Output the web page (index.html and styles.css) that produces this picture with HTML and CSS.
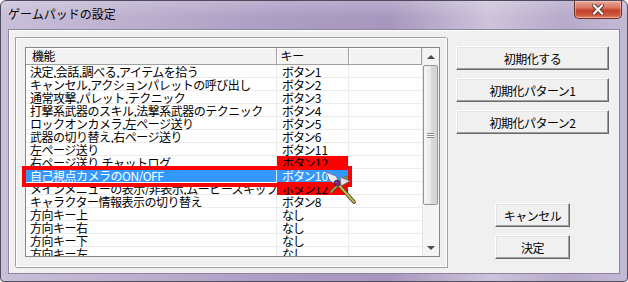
FILE: index.html
```html
<!DOCTYPE html>
<html lang="ja">
<head>
    <meta charset="UTF-8">
    <title>ゲームパッドの設定</title>
    <link rel="stylesheet" href="styles.css">
</head>
<body>
    <div class="window">
        <div class="titlebar">
            <span class="title">ゲームパッドの設定</span>
            <div class="close">
                <svg width="12" height="11" viewBox="0 0 12 11">
                    <path d="M2 1.5 L10 9.5 M10 1.5 L2 9.5" stroke="#5a2a22" stroke-width="4" stroke-linecap="square"/>
                    <path d="M2 1.5 L10 9.5 M10 1.5 L2 9.5" stroke="#fff" stroke-width="2.2" stroke-linecap="square"/>
                </svg>
            </div>
        </div>

        <div class="client">
            <div class="group">
                <div class="listview">
                    <div class="list">
                        <div class="header">
                            <div class="c1">機能</div>
                            <div class="c2">キー</div>
                            <div class="c3"></div>
                        </div>
                        <div class="row"><div class="c1">決定,会話,調べる,アイテムを拾う</div><div class="c2">ボタン1</div><div class="c3"></div></div>
                        <div class="row"><div class="c1">キャンセル,アクションパレットの呼び出し</div><div class="c2">ボタン2</div><div class="c3"></div></div>
                        <div class="row"><div class="c1">通常攻撃,パレット,テクニック</div><div class="c2">ボタン3</div><div class="c3"></div></div>
                        <div class="row"><div class="c1">打撃系武器のスキル,法撃系武器のテクニック</div><div class="c2">ボタン4</div><div class="c3"></div></div>
                        <div class="row"><div class="c1">ロックオンカメラ,左ページ送り</div><div class="c2">ボタン5</div><div class="c3"></div></div>
                        <div class="row"><div class="c1">武器の切り替え,右ページ送り</div><div class="c2">ボタン6</div><div class="c3"></div></div>
                        <div class="row"><div class="c1">左ページ送り</div><div class="c2">ボタン11</div><div class="c3"></div></div>
                        <div class="row"><div class="c1">右ページ送り,チャットログ</div><div class="c2 dup">ボタン12</div><div class="c3"></div></div>
                        <div class="row sel"><div class="c1">自己視点カメラのON/OFF</div><div class="c2">ボタン10</div><div class="c3"></div></div>
                        <div class="row"><div class="c1">メインメニューの表示/非表示,ムービースキップ</div><div class="c2 dup">ボタン12</div><div class="c3"></div></div>
                        <div class="row"><div class="c1">キャラクター情報表示の切り替え</div><div class="c2">ボタン8</div><div class="c3"></div></div>
                        <div class="row"><div class="c1">方向キー上</div><div class="c2">なし</div><div class="c3"></div></div>
                        <div class="row"><div class="c1">方向キー右</div><div class="c2">なし</div><div class="c3"></div></div>
                        <div class="row"><div class="c1">方向キー下</div><div class="c2">なし</div><div class="c3"></div></div>
                        <div class="row"><div class="c1">方向キー左</div><div class="c2">なし</div><div class="c3"></div></div>
                    </div>
                    <div class="scrollbar">
                        <div class="sb-btn"><span class="arrow-up"></span></div>
                        <div class="thumb"><span class="grip"></span></div>
                        <div class="track"></div>
                        <div class="sb-btn"><span class="arrow-down"></span></div>
                    </div>
                </div>
            </div>

            <div class="side">
                <button class="btn wide">初期化する</button>
                <button class="btn wide">初期化パターン1</button>
                <button class="btn wide">初期化パターン2</button>
                <div class="bottom">
                    <button class="btn small">キャンセル</button>
                    <button class="btn small">決定</button>
                </div>
            </div>
        </div>

        <!-- annotation over the selected row -->
        <div class="mark"></div>
        <svg class="cursor" width="34" height="36" viewBox="0 0 34 36">
            <path d="M12 12 L29 31" stroke="#4e4a1c" stroke-width="3.8" stroke-linecap="round"/>
            <path d="M12 12 L29 31" stroke="#c4b85a" stroke-width="1.9" stroke-linecap="round"/>
            <path d="M6 21 L21 6" stroke="#4e5a2a" stroke-width="2.8" stroke-linecap="round"/>
            <path d="M6 21 L21 6" stroke="#aab462" stroke-width="1.3" stroke-linecap="round"/>
            <polygon points="1,1 11,5 13,9 9,12 5,10" fill="#eeeef4" stroke="#6a6a78" stroke-width="0.8"/>
            <polygon points="15,6 25,10 16,15" fill="#e2e2ea" stroke="#6a6a78" stroke-width="0.8"/>
            <circle cx="12" cy="12" r="2.8" fill="#8a2a8a" stroke="#3a1a3a" stroke-width="0.8"/>
        </svg>
    </div>
</body>
</html>
```

FILE: styles.css
```css
body {
    margin: 0;
    font-family: "Noto Sans CJK JP", "Noto Sans", sans-serif;
    font-size: 12px;
    color: #000;
    background: #fff;
}

.window {
    position: relative;
    width: 628px;
    height: 282px;
    box-sizing: border-box;
    border: 1px solid #4f4a5e;
    border-radius: 6px 6px 4px 4px;
    background: linear-gradient(to right, #c9bfd8 0%, #bdb0cf 20%, #ab9cc3 45%, #a797be 62%, #cdc3da 78%, #b6a9ca 90%, #c4b9d5 100%);
    overflow: hidden;
}

.titlebar {
    height: 28px;
    display: flex;
    align-items: flex-start;
    justify-content: space-between;
    background: linear-gradient(to bottom, rgba(255, 255, 255, 0.2), rgba(255, 255, 255, 0) 60%);
}

.title {
    margin: 5px 0 0 7px;
    line-height: 16px;
}

.close {
    width: 48px;
    height: 18px;
    margin-right: 5px;
    box-sizing: border-box;
    border: 1px solid #6b3128;
    border-top: none;
    border-radius: 0 0 5px 5px;
    background: linear-gradient(to bottom, #e9a999 0%, #d8755f 40%, #c2412a 55%, #cf5a3e 85%, #e88a6a 100%);
    box-shadow: inset 0 0 0 1px rgba(255, 220, 210, 0.45);
    display: flex;
    align-items: center;
    justify-content: center;
}

.client {
    display: flex;
    width: 612px;
    height: 245px;
    margin-left: 7px;
    box-sizing: border-box;
    padding: 7px 0 0 6px;
    background: #f0f0f0;
    border: 1px solid #8d84a0;
    box-shadow: inset 1px 1px 0 #fff;
}

.group {
    width: 432px;
    height: 230px;
    box-sizing: border-box;
    padding: 9px;
    border: 1px solid #a0a0a0;
    border-right-color: #fff;
    border-bottom-color: #fff;
    box-shadow: inset 1px 1px 0 #fff, 1px 1px 0 #a0a0a0;
}

.listview {
    display: flex;
    width: 415px;
    height: 210px;
    box-sizing: border-box;
    border: 1px solid #828790;
    background: #fff;
}

.list {
    width: 396px;
    overflow: hidden;
}

.header, .row {
    display: flex;
    white-space: nowrap;
}

.header {
    height: 17px;
    line-height: 16px;
    background: #f3f3f3;
}

.header > div {
    box-sizing: border-box;
    border-right: 1px solid #a0a0a0;
    border-bottom: 1px solid #a0a0a0;
    box-shadow: inset 1px 1px 0 #fff;
}

.header .c1 {
    padding-left: 6px;
}

.header .c2 {
    padding-left: 4px;
}

.row {
    height: 13px;
    line-height: 13px;
}

/* grid lines drawn as a background so the text keeps the full row height */
.row > div {
    box-sizing: border-box;
    overflow: hidden;
    background-image: linear-gradient(to top, #ececec 1px, transparent 1px);
}

.c1 {
    width: 251px;
    flex: none;
    letter-spacing: -0.5px;
}

.c2 {
    width: 72px;
    flex: none;
    font-feature-settings: "palt";
}

.c3 {
    flex: 1;
}

.row .c1 {
    padding-left: 4px;
    border-right: 1px solid #ececec;
}

.row .c2 {
    padding-left: 5px;
    border-right: 1px solid #ececec;
}

.row.sel .c1, .row.sel .c2 {
    background: #3399ff;
    color: #fff;
    border-right-color: #dfefff;
}

.row .c2.dup {
    background: #ff0000;
}

.scrollbar {
    width: 17px;
    display: flex;
    flex-direction: column;
    background: #f4f4f4;
    border-left: 1px solid #e6e6e6;
    box-sizing: border-box;
}

.sb-btn {
    height: 17px;
    flex: none;
    display: flex;
    align-items: center;
    justify-content: center;
}

.arrow-up, .arrow-down {
    width: 0;
    height: 0;
    border-left: 4px solid transparent;
    border-right: 4px solid transparent;
}

.arrow-up {
    border-bottom: 4px solid #4a4a4a;
}

.arrow-down {
    border-top: 4px solid #4a4a4a;
}

.thumb {
    height: 140px;
    flex: none;
    margin: 0 1px 0 0;
    box-sizing: border-box;
    border: 1px solid #979797;
    border-radius: 2px;
    background: linear-gradient(to right, #f6f6f6, #e9e9e9 50%, #dadada 51%, #d3d3d3);
    display: flex;
    align-items: center;
    justify-content: center;
}

.grip {
    width: 7px;
    height: 5px;
    background: repeating-linear-gradient(to bottom, #8a8a8a 0 1px, #fafafa 1px 2px);
}

.track {
    flex: 1;
}

.side {
    width: 153px;
    margin-left: 9px;
    padding: 9px 0 14px;
    display: flex;
    flex-direction: column;
}

.btn {
    height: 24px;
    margin: 0 0 8px;
    padding: 0;
    font: inherit;
    letter-spacing: -0.5px;
    color: #000;
    background: #f0f0f0;
    border: 1px solid;
    border-color: #fff #696969 #696969 #fff;
    box-shadow: inset -1px -1px 0 #a0a0a0, inset 1px 1px 0 #e3e3e3;
}

.btn.wide {
    width: 153px;
}

.bottom {
    margin-top: auto;
    display: flex;
    flex-direction: column;
    align-items: center;
}

.btn.small {
    width: 75px;
}

.bottom .btn:last-child {
    margin-bottom: 0;
}

.mark {
    position: absolute;
    left: 21px;
    top: 165px;
    width: 330px;
    height: 21px;
    box-sizing: border-box;
    border: 4px solid #ff0000;
}

.cursor {
    position: absolute;
    left: 324px;
    top: 170px;
}
```
